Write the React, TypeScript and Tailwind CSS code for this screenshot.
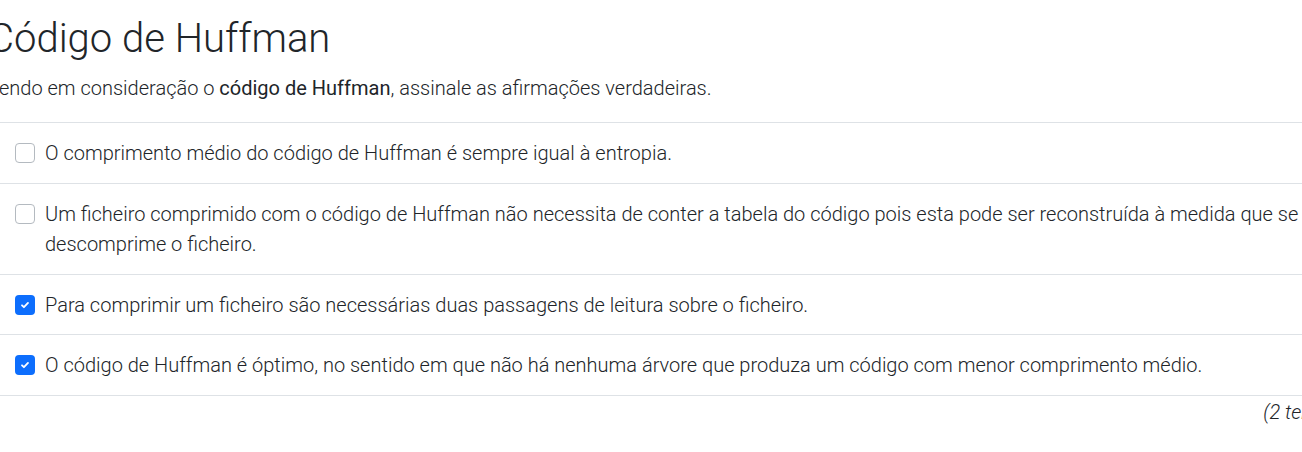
import React from "react";

const items = [
  { text: "O comprimento médio do código de Huffman é sempre igual à entropia.", checked: false },
  { text: "Um ficheiro comprimido com o código de Huffman não necessita de conter a tabela do código pois esta pode ser reconstruída à medida que se descomprime o ficheiro.", checked: false },
  { text: "Para comprimir um ficheiro são necessárias duas passagens de leitura sobre o ficheiro.", checked: true },
  { text: "O código de Huffman é óptimo, no sentido em que não há nenhuma árvore que produza um código com menor comprimento médio.", checked: true },
];

function Box({ checked }: { checked: boolean }) {
  if (checked) {
    return (
      <span className="mt-[5px] flex h-[20px] w-[20px] shrink-0 items-center justify-center rounded-[4px] bg-[#0d6efd]">
        <svg width="12" height="12" viewBox="0 0 20 20" fill="none">
          <path d="M5 10.5l3.2 3.2L15 6.5" stroke="#fff" strokeWidth="3" strokeLinecap="round" strokeLinejoin="round" />
        </svg>
      </span>
    );
  }
  return <span className="mt-[5px] block h-[20px] w-[20px] shrink-0 rounded-[4px] border border-[#b4bac0] bg-white" />;
}

export default function App() {
  return (
    <div className="h-[452px] w-[1302px] overflow-hidden bg-white text-[#212529]" style={{ fontFamily: "Roboto, 'Liberation Sans', sans-serif" }}>
      <div className="ml-[-12px] w-[1387px]">
        <h1 className="pt-[15px] text-[40px] font-light leading-[48px]">Código de Huffman</h1>
        <p className="mt-[11px] text-[20px] font-light leading-[28px]">
          Tendo em consideração o <strong className="font-normal">código de Huffman</strong>, assinale as afirmações verdadeiras.
        </p>
        <div className="mt-[20px] border-t border-[#dee2e6]">
          {items.map((it, i) => (
            <div key={i} className="flex gap-[10px] border-b border-[#dee2e6] pb-[14.75px] pl-[27px] pr-[20px] pt-[15px]">
              <Box checked={it.checked} />
              <span className="text-[20px] font-light leading-[30px]">{it.text}</span>
            </div>
          ))}
        </div>
        <div className="mt-[2px] text-right text-[20px] font-light italic leading-[29px]">(2 tentativas)</div>
      </div>
    </div>
  );
}
